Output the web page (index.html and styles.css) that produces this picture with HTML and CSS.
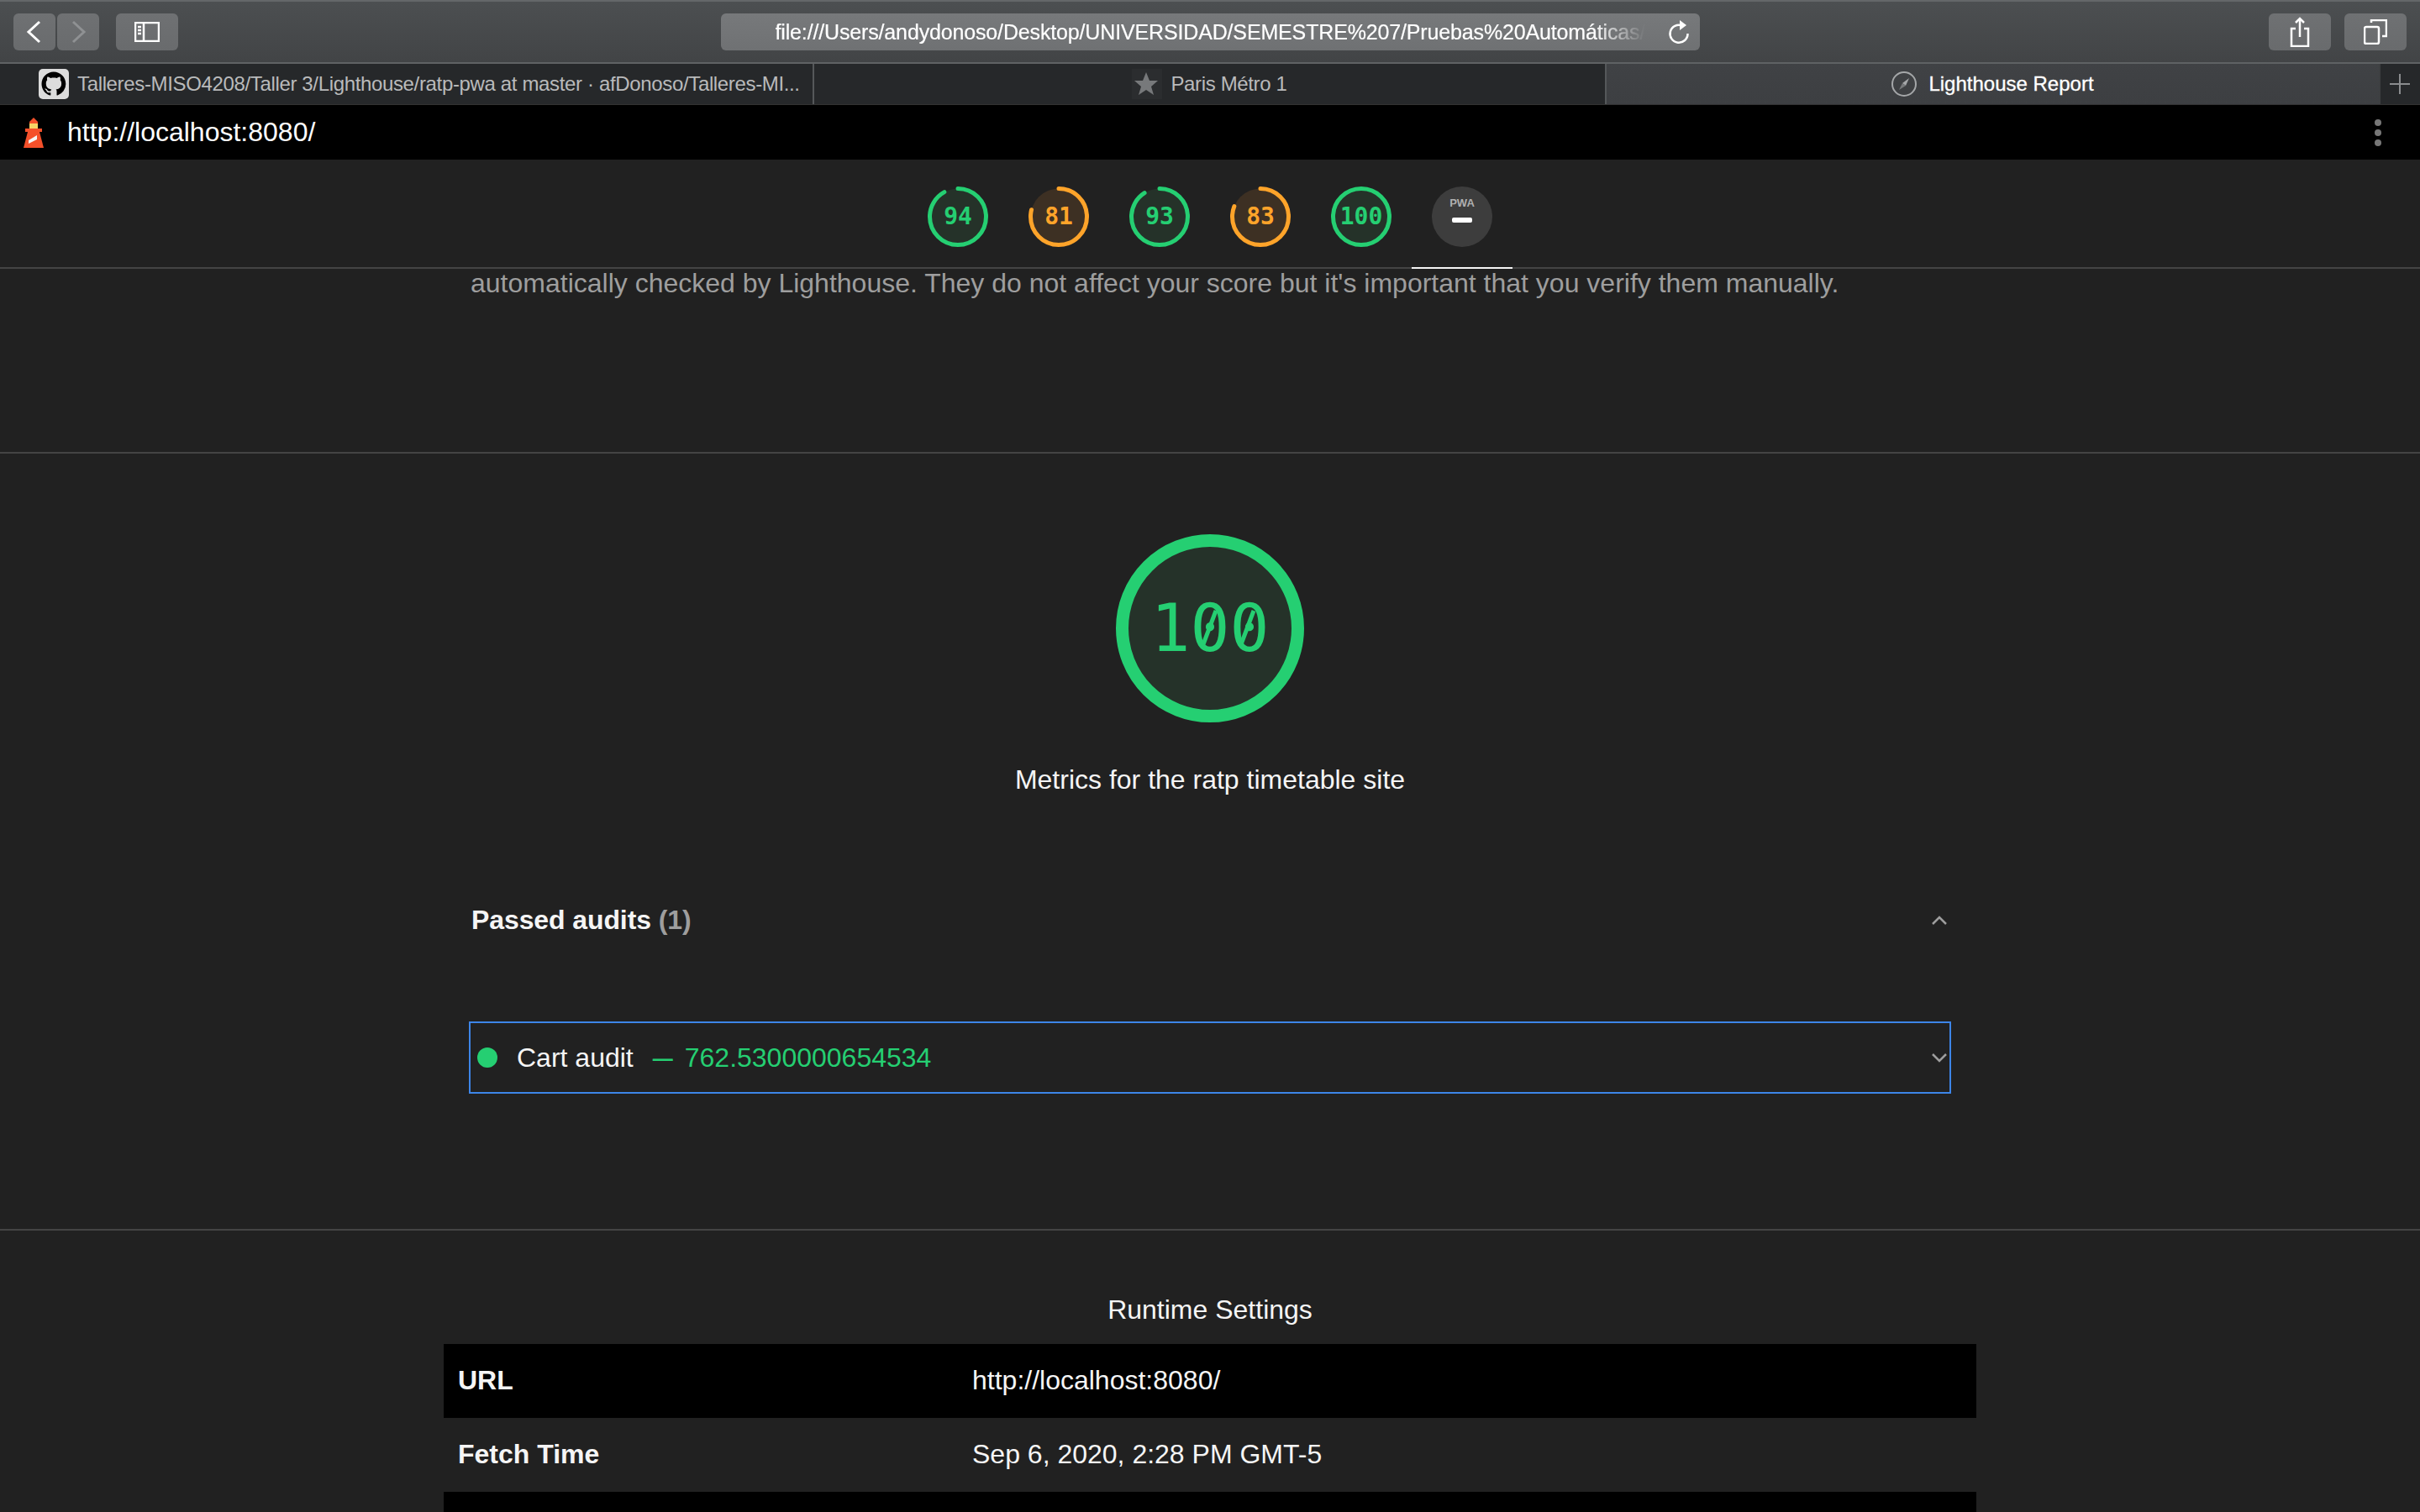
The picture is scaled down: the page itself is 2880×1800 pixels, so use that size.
FILE: index.html
```html
<!DOCTYPE html>
<html lang="en">

<head>
    <meta charset="UTF-8">
    <title>Lighthouse Report</title>
    <link rel="stylesheet" href="styles.css">
</head>

<body>
<!-- browser chrome -->
<div class="toolbar">
    <div class="toolbar-left">
        <div class="nav-btns">
            <div class="btn nav-btn">
                <svg width="20" height="30" viewBox="0 0 20 30"><polyline points="16,3 3,15 16,27" class="ico"/></svg>
            </div>
            <div class="btn nav-btn">
                <svg width="20" height="30" viewBox="0 0 20 30"><polyline points="4,3 17,15 4,27" class="ico ico-dim"/></svg>
            </div>
        </div>
        <div class="btn side-btn">
            <svg width="30" height="24" viewBox="0 0 30 24">
                <rect x="1" y="1" width="28" height="22" class="ico ico-thin"/>
                <line x1="11" y1="1" x2="11" y2="23" class="ico ico-thin"/>
                <line x1="4" y1="6" x2="8" y2="6" class="ico ico-thin"/>
                <line x1="4" y1="10" x2="8" y2="10" class="ico ico-thin"/>
                <line x1="4" y1="14" x2="8" y2="14" class="ico ico-thin"/>
            </svg>
        </div>
    </div>
    <div class="address">
        <span class="address-text">file:///Users/andydonoso/Desktop/UNIVERSIDAD/SEMESTRE%207/Pruebas%20Automáticas/</span>
        <svg width="26" height="30" viewBox="0 0 26 30">
            <path d="M17 7.5 A10.5 10.5 0 1 0 23.5 17" class="ico ico-thin"/>
            <polygon points="14,1 22,7 14,13" fill="#fff"/>
        </svg>
    </div>
    <div class="toolbar-right">
        <div class="btn action-btn">
            <svg width="24" height="36" viewBox="0 0 24 36">
                <polyline points="7,14 2,14 2,35 22,35 22,14 17,14" class="ico ico-thin"/>
                <line x1="12" y1="2" x2="12" y2="24" class="ico ico-thin"/>
                <polyline points="7,7 12,2 17,7" class="ico ico-thin"/>
            </svg>
        </div>
        <div class="btn action-btn">
            <svg width="28" height="30" viewBox="0 0 28 30">
                <rect x="1" y="9" width="17" height="20" rx="2" class="ico ico-thin"/>
                <polyline points="9,4 9,1 27,1 27,20 22,20" class="ico ico-thin"/>
            </svg>
        </div>
    </div>
</div>

<div class="tabs">
    <div class="tab tab-first">
        <svg class="tab-icon" width="36" height="36" viewBox="0 0 36 36">
            <rect width="36" height="36" rx="5" fill="#dcdcdc"/>
            <g transform="translate(3.5 3.5) scale(1.8)">
                <path fill="#000" d="M8 0C3.58 0 0 3.58 0 8c0 3.54 2.29 6.53 5.47 7.59.4.07.55-.17.55-.38 0-.19-.01-.82-.01-1.49-2.01.37-2.53-.49-2.69-.94-.09-.23-.48-.94-.82-1.13-.28-.15-.68-.52-.01-.53.63-.01 1.08.58 1.23.82.72 1.21 1.87.87 2.33.66.07-.52.28-.87.51-1.07-1.78-.2-3.64-.89-3.64-3.95 0-.87.31-1.59.82-2.15-.08-.2-.36-1.02.08-2.12 0 0 .67-.21 2.2.82.64-.18 1.32-.27 2-.27.68 0 1.36.09 2 .27 1.53-1.04 2.2-.82 2.2-.82.44 1.1.16 1.92.08 2.12.51.56.82 1.27.82 2.15 0 3.07-1.87 3.75-3.65 3.95.29.25.54.73.54 1.48 0 1.07-.01 1.93-.01 2.2 0 .21.15.46.55.38A8.013 8.013 0 0016 8c0-4.42-3.58-8-8-8z"/>
            </g>
        </svg>
        <span>Talleres-MISO4208/Taller 3/Lighthouse/ratp-pwa at master · afDonoso/Talleres-MI...</span>
    </div>
    <div class="tab">
        <svg class="tab-icon" width="36" height="36" viewBox="0 0 36 36">
            <rect width="36" height="36" fill="#2b2d2f"/>
            <polygon points="17,4 21,14 31,14 23,21 26,31 17,25 8,31 11,21 3,14 13,14" fill="#77797b"/>
        </svg>
        <span>Paris Métro 1</span>
    </div>
    <div class="tab tab-active">
        <svg class="tab-icon" width="30" height="30" viewBox="0 0 30 30">
            <circle cx="15" cy="15" r="14" fill="none" stroke="#a5a7a9" stroke-width="2"/>
            <polygon points="21,8 17,17 13,14" fill="#a5a7a9"/>
            <polygon points="9,22 13,14 17,17" fill="#77797b"/>
        </svg>
        <span>Lighthouse Report</span>
    </div>
    <div class="tab tab-new">
        <svg width="24" height="24" viewBox="0 0 24 24">
            <line x1="12" y1="0" x2="12" y2="24" stroke="#8a8c8e" stroke-width="2"/>
            <line x1="0" y1="12" x2="24" y2="12" stroke="#8a8c8e" stroke-width="2"/>
        </svg>
    </div>
</div>

<!-- report -->
<div class="topbar">
    <svg class="topbar-logo" width="24" height="36" viewBox="0 0 24 36">
        <polygon points="12,0 17,5 17,8 7,8 7,5" fill="#f4502a"/>
        <rect x="7" y="7" width="10" height="6" fill="#f6d365"/>
        <rect x="2" y="13" width="20" height="4" fill="#f4502a"/>
        <polygon points="5,17 19,17 24,36 0,36" fill="#f4502a"/>
        <polygon points="6,27 16,21 16,26 6,31" fill="#f5f5f5"/>
    </svg>
    <span class="topbar-url">http://localhost:8080/</span>
    <div class="topbar-menu">
        <span class="menu-dot"></span>
        <span class="menu-dot"></span>
        <span class="menu-dot"></span>
    </div>
</div>

<div class="scores">
    <div class="score-item">
        <div class="gauge gauge-small pass">
            <svg viewBox="0 0 72 72">
                <circle cx="36" cy="36" r="33.5" class="gauge-base"/>
                <circle cx="36" cy="36" r="33.5" class="gauge-arc" pathLength="100" stroke-dasharray="92 100" transform="rotate(-90 36 36)"/>
            </svg>
            <span class="gauge-num">94</span>
        </div>
    </div>
    <div class="score-item">
        <div class="gauge gauge-small average">
            <svg viewBox="0 0 72 72">
                <circle cx="36" cy="36" r="33.5" class="gauge-base"/>
                <circle cx="36" cy="36" r="33.5" class="gauge-arc" pathLength="100" stroke-dasharray="79 100" transform="rotate(-90 36 36)"/>
            </svg>
            <span class="gauge-num">81</span>
        </div>
    </div>
    <div class="score-item">
        <div class="gauge gauge-small pass">
            <svg viewBox="0 0 72 72">
                <circle cx="36" cy="36" r="33.5" class="gauge-base"/>
                <circle cx="36" cy="36" r="33.5" class="gauge-arc" pathLength="100" stroke-dasharray="91 100" transform="rotate(-90 36 36)"/>
            </svg>
            <span class="gauge-num">93</span>
        </div>
    </div>
    <div class="score-item">
        <div class="gauge gauge-small average">
            <svg viewBox="0 0 72 72">
                <circle cx="36" cy="36" r="33.5" class="gauge-base"/>
                <circle cx="36" cy="36" r="33.5" class="gauge-arc" pathLength="100" stroke-dasharray="81 100" transform="rotate(-90 36 36)"/>
            </svg>
            <span class="gauge-num">83</span>
        </div>
    </div>
    <div class="score-item">
        <div class="gauge gauge-small pass">
            <svg viewBox="0 0 72 72">
                <circle cx="36" cy="36" r="33.5" class="gauge-base"/>
                <circle cx="36" cy="36" r="33.5" class="gauge-arc"/>
            </svg>
            <span class="gauge-num">100</span>
        </div>
    </div>
    <div class="score-item score-current">
        <div class="pwa-badge">
            <span class="pwa-label">PWA</span>
            <span class="pwa-dash"></span>
        </div>
    </div>
</div>

<div class="note-section">
    <p class="note">automatically checked by Lighthouse. They do not affect your score but it's important that you verify them manually.</p>
</div>

<div class="category">
    <div class="gauge gauge-big pass">
        <svg viewBox="0 0 224 224">
            <circle cx="112" cy="112" r="104.5" class="gauge-base"/>
            <circle cx="112" cy="112" r="104.5" class="gauge-arc"/>
            <!-- the zeros of the score have a slash -->
            <line x1="104" y1="131" x2="119" y2="91" class="zero-slash"/>
            <line x1="149" y1="131" x2="164" y2="91" class="zero-slash"/>
        </svg>
        <span class="gauge-num">100</span>
    </div>
    <div class="category-title">Metrics for the ratp timetable site</div>

    <div class="group-head">
        <div><b>Passed audits</b> <b class="group-count">(1)</b></div>
        <svg class="chevron" width="18" height="11" viewBox="0 0 18 11"><polyline points="1,10 9,2 17,10"/></svg>
    </div>

    <div class="audit">
        <span class="audit-dot"></span>
        <span class="audit-name">Cart audit</span>
        <span class="audit-value"><span class="audit-dash">—</span>762.5300000654534</span>
        <svg class="chevron" width="18" height="11" viewBox="0 0 18 11"><polyline points="1,1 9,9 17,1"/></svg>
    </div>
</div>

<div class="runtime">
    <div class="runtime-title">Runtime Settings</div>
    <table class="runtime-table">
        <tr>
            <th>URL</th>
            <td>http://localhost:8080/</td>
        </tr>
        <tr>
            <th>Fetch Time</th>
            <td>Sep 6, 2020, 2:28 PM GMT-5</td>
        </tr>
        <tr>
            <th></th>
            <td></td>
        </tr>
    </table>
</div>
</body>

</html>
```

FILE: styles.css
```css
* {
    padding: 0;
    margin: 0;
    box-sizing: border-box;
}

body {
    width: 2880px;
    height: 1800px;
    overflow: hidden;
    background-color: #212121;
    color: #f5f5f5;
    font: 32px/48px "Liberation Sans", Arial, sans-serif;
}

/* browser chrome */
.toolbar {
    display: grid;
    grid-template-columns: 1fr 1165px 1fr;
    align-items: center;
    height: 76px;
    padding: 0 16px;
    background: linear-gradient(#4c4f51, #424446);
    border-top: 2px solid #646769;
    border-bottom: 2px solid #5f6264;
}

.toolbar-left,
.toolbar-right,
.nav-btns {
    display: flex;
    align-items: center;
}

.toolbar-left {
    gap: 20px;
}

.nav-btns {
    gap: 2px;
}

.toolbar-right {
    justify-content: flex-end;
    gap: 16px;
}

.btn {
    display: flex;
    align-items: center;
    justify-content: center;
    height: 44px;
    border-radius: 6px;
    background: linear-gradient(#6f7173, #696b6d);
}

.nav-btn {
    width: 50px;
}

.side-btn {
    width: 74px;
}

.action-btn {
    width: 74px;
}

.ico {
    fill: none;
    stroke: #fff;
    stroke-width: 3;
}

.ico-thin {
    stroke-width: 2.5;
}

.ico-dim {
    stroke: #8f9193;
}

.address {
    display: flex;
    align-items: center;
    justify-content: space-between;
    height: 44px;
    padding: 0 12px 0 65px;
    border-radius: 6px;
    background: linear-gradient(#77797b, #6f7173);
}

.address-text {
    white-space: nowrap;
    font-size: 25px;
    letter-spacing: -0.15px;
    line-height: 44px;
    color: #fff;
    -webkit-text-stroke: 0.2px #fff;
    -webkit-mask-image: linear-gradient(to right, #000 94%, transparent 100%);
    mask-image: linear-gradient(to right, #000 94%, transparent 100%);
}

.tabs {
    display: grid;
    grid-template-columns: 967px 943px 921px 49px;
    height: 48px;
    background-color: #26282a;
}

.tab {
    display: flex;
    align-items: center;
    justify-content: center;
    gap: 10px;
    border-left: 2px solid #55585a;
    font-size: 24px;
    letter-spacing: -0.35px;
    line-height: 48px;
    color: #b9babb;
    white-space: nowrap;
}

.tab-first {
    justify-content: flex-start;
    padding-left: 46px;
    border-left: 0;
}

.tab-active {
    gap: 14px;
    background: linear-gradient(#404245, #3d3f42);
    color: #fff;
    letter-spacing: 0;
    -webkit-text-stroke: 0.3px #fff;
}

.tab-new {
    padding-right: 2px;
    border-left-color: #3d3f41;
}

.tab-icon {
    flex: none;
}

/* report header */
.topbar {
    display: flex;
    align-items: center;
    height: 66px;
    padding-left: 28px;
    background-color: #000;
    border-top: 1px solid #333;
}

.topbar-url {
    margin-left: 28px;
    padding-bottom: 2px;
    color: #fff;
}

.topbar-menu {
    display: flex;
    flex-direction: column;
    gap: 4px;
    margin-left: auto;
    margin-right: 46px;
}

.menu-dot {
    width: 8px;
    height: 8px;
    border-radius: 50%;
    background-color: #777;
}

.scores {
    display: flex;
    justify-content: center;
    height: 130px;
    border-bottom: 2px solid #444;
}

.score-item {
    display: flex;
    justify-content: center;
    width: 120px;
    height: 130px;
    padding-top: 32px;
}

.score-current {
    border-bottom: 2px solid #f5f5f5;
}

/* gauges */
.gauge {
    display: grid;
    place-items: center;
    font-family: "DejaVu Sans Mono", "Liberation Mono", monospace;
}

.gauge svg,
.gauge .gauge-num {
    grid-area: 1 / 1;
}

.gauge-small {
    width: 72px;
    height: 72px;
}

.gauge-small svg {
    width: 72px;
    height: 72px;
}

.gauge-small .gauge-num {
    font-size: 28px;
    font-weight: bold;
    line-height: 72px;
}

.gauge-small .gauge-base,
.gauge-small .gauge-arc {
    stroke-width: 5;
}

.gauge-big {
    width: 224px;
    height: 224px;
}

.gauge-big svg {
    width: 224px;
    height: 224px;
}

.gauge-big .gauge-num {
    font-size: 78px;
    line-height: 224px;
}

.gauge-big .gauge-base,
.gauge-big .gauge-arc {
    stroke-width: 15;
}

.gauge-arc {
    fill: none;
    stroke-linecap: round;
}

.gauge-base {
    stroke: none;
}

.zero-slash {
    stroke: #25cf72;
    stroke-width: 5;
}

.pass .gauge-num {
    color: #25cf72;
}

.pass .gauge-arc {
    stroke: #25cf72;
}

.pass .gauge-base {
    fill: #253229;
}

.average .gauge-num {
    color: #ffa42a;
}

.average .gauge-arc {
    stroke: #ffa42a;
}

.average .gauge-base {
    fill: #3d3023;
}

.pwa-badge {
    display: flex;
    flex-direction: column;
    align-items: center;
    width: 72px;
    height: 72px;
    padding-top: 12px;
    border-radius: 50%;
    background-color: #3d3d3d;
}

.pwa-label {
    font-size: 13px;
    line-height: 16px;
    font-weight: bold;
    color: #b0b0b0;
}

.pwa-dash {
    width: 24px;
    height: 6px;
    margin-top: 9px;
    border-radius: 2px;
    background-color: #fff;
}

/* content */
.note-section {
    height: 220px;
    padding: 1px 0 0 560px;
    border-bottom: 2px solid #444;
}

.note {
    line-height: 32px;
    color: #9e9e9e;
}

.category {
    display: flex;
    flex-direction: column;
    align-items: center;
    width: 1764px;
    height: 923px;
    margin: 0 auto;
    padding-top: 96px;
}

.category-title {
    margin-top: 44px;
}

.group-head {
    display: flex;
    align-items: center;
    justify-content: space-between;
    width: 100%;
    margin-top: 119px;
    padding: 0 5px 0 3px;
    letter-spacing: -0.1px;
}

.group-count {
    color: #9e9e9e;
}

.chevron {
    flex: none;
}

.chevron polyline {
    fill: none;
    stroke: #9e9e9e;
    stroke-width: 2.5;
}

.audit {
    display: flex;
    align-items: center;
    width: 100%;
    height: 86px;
    margin-top: 97px;
    padding: 0 3px 0 8px;
    border: 2px solid #3d85e8;
}

.audit-dot {
    width: 24px;
    height: 24px;
    border-radius: 50%;
    background-color: #25cf72;
}

.audit-name {
    margin-left: 23px;
}

.audit-value {
    flex: 1;
    margin-left: 23px;
    color: #25cf72;
}

.audit-dash {
    margin-right: 14px;
    font-size: 24px;
    font-weight: bold;
    vertical-align: 2px;
}

.runtime {
    border-top: 2px solid #444;
}

.runtime-title {
    margin-top: 70px;
    text-align: center;
}

.runtime-table {
    width: 1824px;
    margin: 17px auto 0;
    border-collapse: collapse;
    border-spacing: 0;
    table-layout: fixed;
}

.runtime-table tr {
    height: 88px;
}

.runtime-table tr:nth-child(odd) {
    background-color: #000;
}

.runtime-table th,
.runtime-table td {
    padding-bottom: 2px;
}

.runtime-table th {
    width: 629px;
    padding-left: 17px;
    text-align: left;
}

.runtime-table td {
    color: #f5f5f5;
}
```
